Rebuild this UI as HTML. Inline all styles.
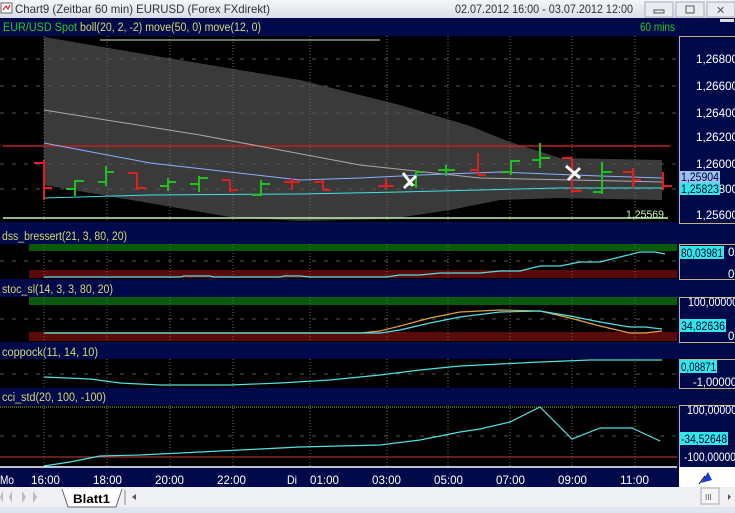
<!DOCTYPE html>
<html><head><meta charset="utf-8"><style>
body{margin:0;width:735px;height:513px;overflow:hidden;background:#000a4a;font-family:"Liberation Sans",sans-serif}
svg{display:block}
</style></head><body>
<svg width="735" height="513" viewBox="0 0 735 513" font-family="Liberation Sans, sans-serif">
<defs>
<linearGradient id="tb" x1="0" y1="0" x2="0" y2="1"><stop offset="0" stop-color="#f4f6f9"/><stop offset="1" stop-color="#d9dee6"/></linearGradient>
</defs>
<rect x="0" y="0" width="735" height="18" fill="url(#tb)"/>
<rect x="1" y="3" width="11" height="10" fill="#fff" stroke="#666"/>
<path d="M3 10 L6 6 L8 9 L10 5" stroke="#c00" fill="none"/>
<text x="15" y="13" font-size="12" fill="#333" textLength="255" lengthAdjust="spacingAndGlyphs">Chart9 (Zeitbar 60 min)  EURUSD (Forex FXdirekt)</text>
<text x="455" y="13" font-size="12" fill="#333" textLength="178" lengthAdjust="spacingAndGlyphs">02.07.2012 16:00 - 03.07.2012 12:00</text>
<rect x="645" y="2" width="28" height="15" fill="#e8ebf0" stroke="#aab"/>
<rect x="654" y="10" width="10" height="3" fill="none" stroke="#555"/>
<rect x="676" y="2" width="28" height="15" fill="#e8ebf0" stroke="#aab"/>
<rect x="686" y="6" width="8" height="7" fill="none" stroke="#555"/>
<rect x="707" y="2" width="28" height="15" fill="#e8ebf0" stroke="#aab"/>
<text x="716" y="14" font-size="11" fill="#555">✕</text>
<rect x="0" y="18" width="735" height="469" fill="#000a4a"/>
<text x="3" y="31" font-size="11.5" fill="#28c828" textLength="74" lengthAdjust="spacingAndGlyphs">EUR/USD Spot</text>
<text x="80" y="31" font-size="11.5" fill="#d8d870" textLength="181" lengthAdjust="spacingAndGlyphs">boll(20, 2, -2) move(50, 0) move(12, 0)</text>
<text x="640" y="31" font-size="11.5" fill="#28c828" textLength="35" lengthAdjust="spacingAndGlyphs">60 mins</text>
<rect x="720" y="19" width="14" height="3" fill="#ddd"/>
<rect x="0" y="36" width="677" height="186" fill="#000"/>
<rect x="0" y="244" width="677" height="35" fill="#000"/>
<rect x="0" y="297" width="677" height="45" fill="#000"/>
<rect x="0" y="359" width="677" height="29" fill="#000"/>
<rect x="0" y="405" width="677" height="62" fill="#000"/>
<g fill="#000a4a" stroke="#c8b080" stroke-width="1">
<rect x="679.5" y="36.5" width="60" height="187"/>
<rect x="679.5" y="244.5" width="60" height="35"/>
<rect x="679.5" y="297.5" width="60" height="45"/>
<rect x="679.5" y="359.5" width="60" height="29"/>
<rect x="679.5" y="405.5" width="60" height="62"/>
</g>
<rect x="29" y="244" width="648" height="7" fill="#0a5a0a"/>
<rect x="29" y="270" width="648" height="8" fill="#5a0a0a"/>
<rect x="29" y="297" width="648" height="8" fill="#0a5a0a"/>
<rect x="29" y="332" width="648" height="9" fill="#5a0a0a"/>
<path d="M44 37 L150 55 L300 80 L400 105 L470 126 L510 142 L560 158 L662 160 L662 200 L560 198 L500 200 L450 210 L390 219 L300 221 L230 217 L44 185 Z" fill="#3a3a3a"/>
<g stroke="#666" stroke-dasharray="1,2" stroke-width="1">
<path d="M44 36V222M107 36V222M170 36V222M233 36V222M310 36V222M387 36V222M448 36V222M510 36V222M572 36V222M635 36V222"/>
<path d="M44 244V279M107 244V279M170 244V279M233 244V279M310 244V279M387 244V279M448 244V279M510 244V279M572 244V279M635 244V279"/>
<path d="M44 297V342M107 297V342M170 297V342M233 297V342M310 297V342M387 297V342M448 297V342M510 297V342M572 297V342M635 297V342"/>
<path d="M44 359V388M107 359V388M170 359V388M233 359V388M310 359V388M387 359V388M448 359V388M510 359V388M572 359V388M635 359V388"/>
<path d="M44 405V467M107 405V467M170 405V467M233 405V467M310 405V467M387 405V467M448 405V467M510 405V467M572 405V467M635 405V467"/>
</g>
<g stroke="#555" stroke-dasharray="4,8">
<path d="M0 59H677M0 86H677M0 113H677M0 164H677M0 189H677M0 261H677M0 319H677M0 374H677M0 436H677"/>
</g>
<path d="M3 146H670" stroke="#c02020" stroke-width="1.5"/>
<path d="M3 218H668" stroke="#c8f0b0" stroke-width="1.5"/>
<path d="M100 40H380" stroke="#c8f0b0" stroke-width="1"/>
<path d="M44 110 L200 135 L360 165 L480 178 L662 182" stroke="#aaa" fill="none"/>
<path d="M44 143 L150 163 L300 180 L360 178 L420 175 L500 172 L600 176 L662 178" stroke="#8ab0ff" fill="none"/>
<path d="M44 198 L150 195 L300 194 L400 192 L480 190 L560 188 L662 188" stroke="#40e0e0" fill="none"/>
<g stroke-width="2" fill="none">
<g stroke="#e02020">
<path d="M44 160V200M34 163H44M44 188H52"/>
<path d="M137 173V190M128 173H137M137 188H146"/>
<path d="M230 180V192M222 180H230M230 190H238"/>
<path d="M292 178V190M284 182H300"/>
<path d="M323 180V190M314 182H323M323 190H331"/>
<path d="M386 178V189M378 186H394"/>
<path d="M478 153V175M470 170H478M478 175H486"/>
<path d="M572 158V193M562 158H572M572 191H582"/>
<path d="M633 168V188M623 172H633M633 180H641"/>
<path d="M663 172V190M663 186H672"/>
</g>
<g stroke="#20c020">
<path d="M75 180V196M66 189H75M75 181H84"/>
<path d="M106 166V186M98 182H106M106 172H114"/>
<path d="M168 178V191M160 186H168M168 182H176"/>
<path d="M199 176V192M190 184H199M199 178H208"/>
<path d="M261 180V196M252 195H261M261 184H270"/>
<path d="M416 172V188M408 185H416M416 172H424"/>
<path d="M446 165V176M438 170H455"/>
<path d="M511 160V175M502 172H511M511 161H520"/>
<path d="M540 143V168M532 160H540M540 158H550"/>
<path d="M602 162V194M593 192H602M602 172H612"/>
</g>
</g>
<path d="M403 173L413 186M404 188L416 176" stroke="#fff" stroke-width="3"/>
<path d="M566 166L580 178M568 180L580 168" stroke="#fff" stroke-width="3"/>
<text x="626" y="218" font-size="11" fill="#c8f0b0" textLength="38" lengthAdjust="spacingAndGlyphs">1,25569</text>
<g font-size="11.5" fill="#fff">
<text x="696" y="63" textLength="42" lengthAdjust="spacingAndGlyphs">1,26800</text><text x="696" y="90" textLength="42" lengthAdjust="spacingAndGlyphs">1,26600</text><text x="696" y="117" textLength="42" lengthAdjust="spacingAndGlyphs">1,26400</text>
<text x="696" y="141" textLength="42" lengthAdjust="spacingAndGlyphs">1,26200</text><text x="696" y="168" textLength="42" lengthAdjust="spacingAndGlyphs">1,26000</text><text x="696" y="193" textLength="42" lengthAdjust="spacingAndGlyphs">1,25800</text><text x="696" y="219" textLength="42" lengthAdjust="spacingAndGlyphs">1,25600</text>
</g>
<rect x="680" y="171" width="40" height="12" fill="#9ac0f0"/>
<text x="681" y="181" font-size="11.5" fill="#003" textLength="38" lengthAdjust="spacingAndGlyphs">1,25904</text>
<rect x="680" y="183" width="40" height="12" fill="#30e8e8"/>
<text x="681" y="193" font-size="11.5" fill="#003" textLength="38" lengthAdjust="spacingAndGlyphs">1,25823</text>
<g font-size="11.5" fill="#d8d870">
<text x="2" y="240" textLength="125" lengthAdjust="spacingAndGlyphs">dss_bressert(21, 3, 80, 20)</text>
<text x="2" y="293" textLength="111" lengthAdjust="spacingAndGlyphs">stoc_sl(14, 3, 3, 80, 20)</text>
<text x="2" y="356" textLength="96" lengthAdjust="spacingAndGlyphs">coppock(11, 14, 10)</text>
<text x="2" y="401" textLength="104" lengthAdjust="spacingAndGlyphs">cci_std(20, 100, -100)</text>
</g>
<path d="M44 277H180L184 276H210L214 277H280L284 276H300L310 277H386L400 275H420L440 273H480L500 271H520L540 266H560L580 262H600L620 257L640 252H655L665 254" stroke="#50e0e0" fill="none" stroke-width="1.2"/>
<rect x="680" y="246" width="44" height="13" fill="#30e8e8"/><text x="681" y="257" font-size="11.5" fill="#003" textLength="42" lengthAdjust="spacingAndGlyphs">80,03981</text>
<text x="728" y="256" font-size="11.5" fill="#fff">0</text><text x="728" y="278" font-size="11.5" fill="#fff">0</text>
<path d="M44 333H360L380 331L400 326L430 318L460 312L500 310L540 311L570 318L600 326L630 333H645L662 331" stroke="#e0a040" fill="none" stroke-width="1.2"/>
<path d="M44 333H360L380 333L400 330L430 323L460 317L500 312L540 311L570 316L600 322L630 327H645L662 329" stroke="#50e0e0" fill="none" stroke-width="1.2"/>
<text x="688" y="306" font-size="11.5" fill="#fff" textLength="50" lengthAdjust="spacingAndGlyphs">100,00000</text>
<rect x="680" y="319" width="46" height="13" fill="#30e8e8"/><text x="681" y="330" font-size="11.5" fill="#003" textLength="44" lengthAdjust="spacingAndGlyphs">34,82636</text>
<text x="728" y="340" font-size="11.5" fill="#fff">0</text>
<path d="M44 377L90 379L120 383L160 385L230 385L280 383L330 380L380 375L420 370L460 366L500 364L540 362L590 360L662 360" stroke="#50e0e0" fill="none" stroke-width="1.2"/>
<rect x="680" y="360" width="37" height="13" fill="#30e8e8"/><text x="681" y="371" font-size="11.5" fill="#003" textLength="35" lengthAdjust="spacingAndGlyphs">0,08871</text>
<text x="693" y="386" font-size="11.5" fill="#fff" textLength="44" lengthAdjust="spacingAndGlyphs">-1,00000</text>
<path d="M0 407H677" stroke="#8ac040" stroke-dasharray="1,1"/>
<path d="M0 457H677" stroke="#a03030" stroke-width="1.2"/>
<path d="M44 466L70 462L100 456L140 455L200 452L260 449L300 447L340 446L380 445L420 440L460 432L480 429L510 422L540 407L572 439L600 428L632 428L660 441" stroke="#50e0e0" fill="none" stroke-width="1.2"/>
<text x="687" y="414" font-size="11.5" fill="#fff" textLength="50" lengthAdjust="spacingAndGlyphs">100,00000</text>
<rect x="680" y="432" width="48" height="13" fill="#30e8e8"/><text x="681" y="443" font-size="11.5" fill="#003" textLength="46" lengthAdjust="spacingAndGlyphs">-34,52648</text>
<text x="684" y="461" font-size="11.5" fill="#fff" textLength="52" lengthAdjust="spacingAndGlyphs">-100,00000</text>
<path d="M0 467H677" stroke="#fff" stroke-width="1.5"/>
<g font-size="12" fill="#fff">
<text x="0" y="484" textLength="14" lengthAdjust="spacingAndGlyphs">Mo</text>
<text x="31" y="484" textLength="29" lengthAdjust="spacingAndGlyphs">16:00</text><text x="93" y="484" textLength="29" lengthAdjust="spacingAndGlyphs">18:00</text><text x="155" y="484" textLength="29" lengthAdjust="spacingAndGlyphs">20:00</text><text x="217" y="484" textLength="29" lengthAdjust="spacingAndGlyphs">22:00</text>
<text x="287" y="484" textLength="10" lengthAdjust="spacingAndGlyphs">Di</text><text x="310" y="484" textLength="29" lengthAdjust="spacingAndGlyphs">01:00</text><text x="372" y="484" textLength="29" lengthAdjust="spacingAndGlyphs">03:00</text><text x="434" y="484" textLength="29" lengthAdjust="spacingAndGlyphs">05:00</text><text x="496" y="484" textLength="29" lengthAdjust="spacingAndGlyphs">07:00</text><text x="558" y="484" textLength="29" lengthAdjust="spacingAndGlyphs">09:00</text><text x="620" y="484" textLength="29" lengthAdjust="spacingAndGlyphs">11:00</text>
</g>
<rect x="679" y="467" width="56" height="20" fill="#fff"/>
<path d="M701 483L708 472L712 480Z" fill="#1a3ad0"/><path d="M699 484L705 476" stroke="#000"/>
<rect x="0" y="487" width="735" height="26" fill="#eef0f4"/>
<rect x="0" y="507" width="735" height="6" fill="#dfe6ee"/>
<g fill="#bbb"><path d="M3 491V503L0 497Z M12 491V503L9 497Z M22 491L26 497L22 503Z M33 491L37 497L33 503Z M41 491V503"/></g>
<path d="M62 489L68 507H116L122 489" fill="#fff" stroke="#666"/>
<text x="73" y="503" font-size="12" font-weight="bold" fill="#000" textLength="37" lengthAdjust="spacingAndGlyphs">Blatt1</text>
<path d="M125 490V505" stroke="#888"/>
<path d="M136 494L132 497L136 500Z" fill="#555"/>
<rect x="701" y="488" width="18" height="16" fill="#f4f4f4" stroke="#aaa"/>
<text x="705" y="500" font-size="8" fill="#555">III</text>
<path d="M728 494L731 497L728 500Z" fill="#555"/>
</svg>
</body></html>
